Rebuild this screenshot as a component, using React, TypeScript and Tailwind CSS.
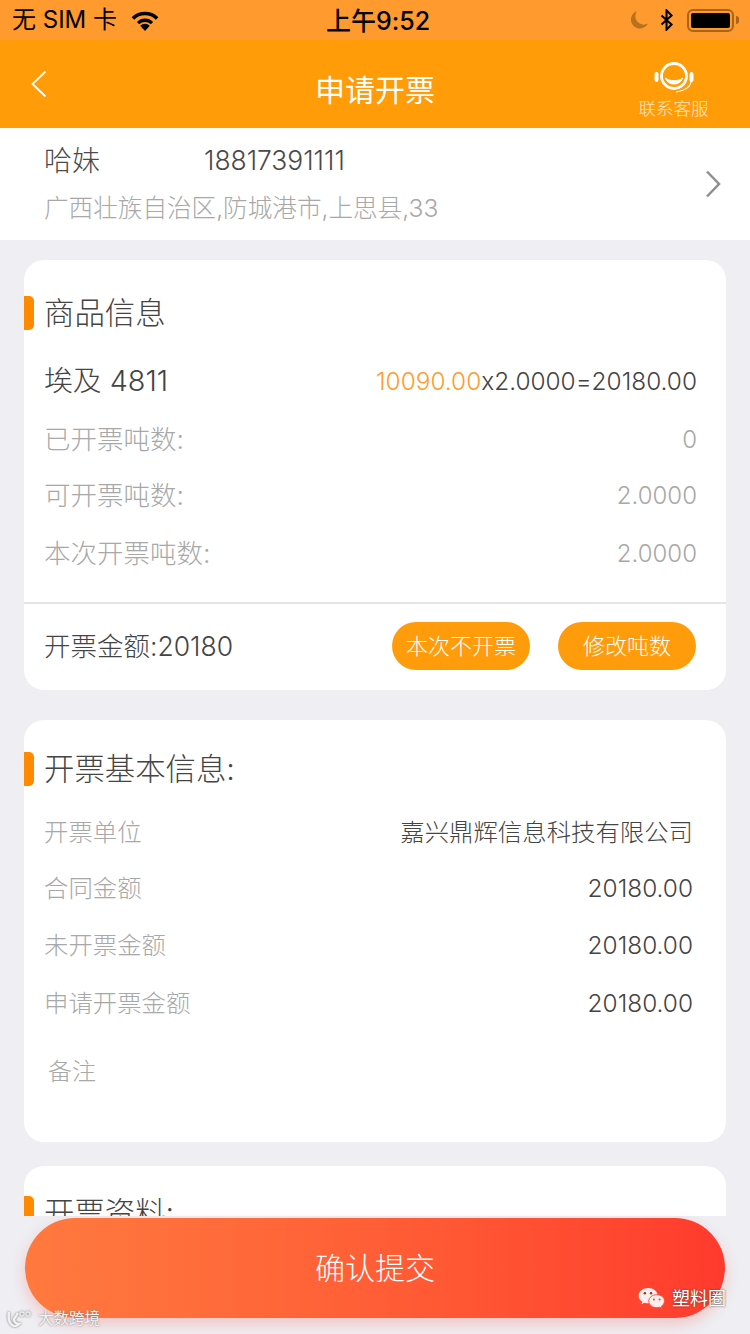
const fontStack = "font-['Inter','Noto_Sans_CJK_SC',sans-serif] font-light [font-feature-settings:'calt'_0]";

type InfoRowProps = {
  label: string;
  value: string;
  height: string;
  labelClass: string;
  valueClass: string;
};

const InfoRow = ({ label, value, height, labelClass, valueClass }: InfoRowProps) => (
  <div className={`flex items-center justify-between ${height}`}>
    <span className={labelClass}>{label}</span>
    <span className={valueClass}>{value}</span>
  </div>
);

const SectionTitle = ({ title }: { title: string }) => (
  <div className="flex items-center">
    <div className="h-[34px] w-[10px] rounded-r-[5px] bg-[#ff8a00]" />
    <h2 className="ml-[10px] text-[30.4px] font-light leading-[40px] text-[#444444]">{title}</h2>
  </div>
);

const StatusBar = () => (
  <div className="relative flex h-[40px] items-center justify-between bg-[#ff9a2e] pl-[12px] pr-[11px] text-black">
    <div className="flex items-center gap-[13px]">
      <span className="text-[24px] font-normal leading-none">无 SIM 卡</span>
      <svg width="30" height="21" viewBox="0 0 30 22">
        <path d="M15 22 10 16.5a7 7 0 0 1 10 0Z" fill="#000" />
        <path d="M6.5 12.5a12 12 0 0 1 17 0l-2.4 2.5a8.6 8.6 0 0 0-12.2 0Z" fill="#000" />
        <path d="M1 7.5a20 20 0 0 1 28 0l-2.6 2.6a16.2 16.2 0 0 0-22.8 0Z" fill="#000" />
      </svg>
    </div>
    <span className="absolute left-[326px] top-[6px] text-[25px] font-medium leading-[30px]">
      上午9:52
    </span>
    <div className="flex items-center">
      <svg width="18" height="18" viewBox="0 0 18 18">
        <path d="M7 0a9 9 0 1 0 11 12.5A8.5 8.5 0 0 1 7 0Z" fill="#b8721f" />
      </svg>
      <svg className="ml-[12px]" width="14" height="22" viewBox="0 0 14 24" fill="none" stroke="#000" strokeWidth="2.2">
        <path d="M1 7l11 10-5.5 5.5v-21L12 7 1 17" />
      </svg>
      <div className="ml-[13px] flex items-center">
        <div className="flex h-[23px] w-[47px] items-center rounded-[6px] border-2 border-[#a8651a] p-[2px]">
          <div className="h-full w-full rounded-[2px] bg-black" />
        </div>
        <div className="ml-[2px] h-[8px] w-[3px] rounded-r-[3px] bg-[#a8651a]" />
      </div>
    </div>
  </div>
);

const NavBar = () => (
  <div className="relative flex h-[88px] items-center justify-center bg-[#ff9c07] pt-[12px]">
    <button type="button" className="absolute left-[30px] top-[30px]">
      <svg width="18" height="28" viewBox="0 0 18 28" fill="none" stroke="#fff" strokeWidth="1.8">
        <path d="M15.5 1.5 2.5 14l13 12.5" />
      </svg>
    </button>
    <h1 className="text-[30px] font-normal leading-none text-white">申请开票</h1>
    <div className="absolute left-[638px] top-[21px] flex w-[71px] flex-col items-center">
      <svg width="42" height="34" viewBox="0 0 42 34" fill="none" stroke="#fff">
        <circle cx="21" cy="15" r="12.5" strokeWidth="2.8" />
        <path d="M12.5 17c2 8 15 8 17 0-3 3.500-14 3.500-17 0Z" fill="#fff" strokeWidth="1" />
        <path d="M3.500 13v6M38.500 13v6" strokeWidth="4" strokeLinecap="round" />
        <path d="M38 20c0 6-7 10-15 11" strokeWidth="1.2" />
      </svg>
      <span className="mt-[3px] whitespace-nowrap text-[17.5px] leading-[22px] text-[#ffe9c8]">联系客服</span>
    </div>
  </div>
);

const AddressBlock = () => (
  <div className="flex h-[112px] items-center justify-between bg-white pl-[44px] pr-[29px]">
    <div className="flex flex-col">
      <div className="flex h-[36px] items-center pb-[4px]">
        <span className="w-[160px] text-[28px] text-[#4a4a4a]">哈妹</span>
        <span className="text-[26.4px] text-[#4a4a4a]">18817391111</span>
      </div>
      <span className="mt-[11px] text-[24.6px] leading-[32px] text-[#a8a8a8]">
        广西壮族自治区,防城港市,上思县,33
      </span>
    </div>
    <svg width="16" height="28" viewBox="0 0 16 28" fill="none" stroke="#8e8e8e" strokeWidth="2.5">
      <path d="M2 1.500 14 14 2 26.500" />
    </svg>
  </div>
);

const GoodsCard = () => {
  const labelClass = "text-[26.5px] text-[#a8a8a8]";
  const valueClass = "text-[24px] text-[#a8a8a8]";
  return (
    <div className="rounded-[20px] bg-white pt-[33px]">
      <SectionTitle title="商品信息" />
      <div className="pl-[20px] pr-[29px]">
        <div className="mt-[28px] flex h-[40px] items-center justify-between">
          <span className="text-[28.8px] text-[#444444]">埃及 4811</span>
          <span className="text-[24.4px] text-[#444444]">
            <span className="text-[#ff9c2e]">10090.00</span>x2.0000=20180.00
          </span>
        </div>
        <div className="mt-[10px]">
          <InfoRow label="已开票吨数:" value="0" height="h-[58px]" labelClass={labelClass} valueClass={valueClass} />
          <InfoRow label="可开票吨数:" value="2.0000" height="h-[54px]" labelClass={labelClass} valueClass={valueClass} />
          <InfoRow label="本次开票吨数:" value="2.0000" height="h-[62px]" labelClass={labelClass} valueClass={valueClass} />
        </div>
      </div>
      <div className="mt-[17px] flex h-[88px] items-center border-t-2 border-[#e5e5e5] pb-[2px] pl-[20px] pr-[30px]">
        <span className="pt-[2px] text-[26.5px] text-[#444444]">开票金额:20180</span>
        <button
          type="button"
          className="ml-auto flex h-[48px] w-[138px] items-center justify-center rounded-full bg-[#ff9c0c] text-[22px] text-white"
        >
          本次不开票
        </button>
        <button
          type="button"
          className="ml-[28px] flex h-[48px] w-[138px] items-center justify-center rounded-full bg-[#ff9c0c] text-[22px] text-white"
        >
          修改吨数
        </button>
      </div>
    </div>
  );
};

const BasicInfoCard = () => {
  const labelClass = "text-[24.4px] text-[#a8a8a8]";
  const valueClass = "text-[24.4px] text-[#444444]";
  return (
    <div className="mt-[30px] h-[422px] rounded-[20px] bg-white pt-[29px]">
      <SectionTitle title="开票基本信息:" />
      <div className="mt-[15px] pl-[20px] pr-[33px]">
        <InfoRow label="开票单位" value="嘉兴鼎辉信息科技有限公司" height="h-[56px]" labelClass={labelClass} valueClass={valueClass} />
        <InfoRow label="合同金额" value="20180.00" height="h-[56px]" labelClass={labelClass} valueClass={valueClass} />
        <InfoRow label="未开票金额" value="20180.00" height="h-[58px]" labelClass={labelClass} valueClass={valueClass} />
        <InfoRow label="申请开票金额" value="20180.00" height="h-[58px]" labelClass={labelClass} valueClass={valueClass} />
        <div className="mt-[24px] pl-[4px] text-[24px] leading-[32px] text-[#a8a8a8]">备注</div>
      </div>
    </div>
  );
};

const DocsCard = () => (
  <div className="mt-[24px] h-[200px] rounded-[20px] bg-white pt-[27px]">
    <SectionTitle title="开票资料:" />
  </div>
);

const SubmitBar = () => (
  <div className="absolute inset-x-0 bottom-0 h-[118px] bg-[#eeeef3]">
    <button
      type="button"
      className="absolute left-[25px] top-[2px] flex h-[100px] w-[700px] items-center justify-center rounded-full bg-gradient-to-r from-[#ff7a3f] to-[#ff3a2d] text-[30px] font-light text-white shadow-[0_6px_14px_rgba(255,70,50,0.25)]"
    >
      确认提交
    </button>
    <div className="absolute left-[7px] top-[95px] flex items-center gap-[5px]">
      <svg className="drop-shadow-[0_0_1px_#777]" width="26" height="16" viewBox="0 0 26 16" fill="none" stroke="#f2f2f4">
        <path d="M2 1c-1 6 0 12 5 14 2 0 4-1 5-2-3 0-5-2-5-5l4-6" strokeWidth="2.4" />
        <circle cx="15" cy="3" r="2.2" strokeWidth="1.2" />
        <circle cx="21" cy="3" r="2.2" strokeWidth="1.2" />
      </svg>
      <span className="text-[15.5px] font-normal leading-none text-[#f2f2f4] [text-shadow:0_0_2px_#777]">大数跨境</span>
    </div>
    <div className="absolute left-[638px] top-[72px] flex items-center gap-[6px]">
      <svg width="28" height="21" viewBox="0 0 28 22">
        <path d="M10 0C4.500 0 0 3.500 0 8c0 2.600 1.500 4.800 3.800 6.300L3 17l3-1.600c1.200.4 2.500.6 4 .6 5.500 0 10-3.500 10-8s-4.500-8-10-8Z" fill="#fdeeee" />
        <path d="M19 7c-4.600 0-8.400 3-8.400 6.800s3.800 6.800 8.400 6.800c1 0 2-.2 3-.5l2.400 1.300-.6-2.200c2-1.300 3.200-3.200 3.200-5.400C27.400 10 23.600 7 19 7Z" fill="#fdeeee" stroke="#ff4a35" strokeWidth="1" />
        <circle cx="6.500" cy="5.500" r="1.300" fill="#8a3a30" />
        <circle cx="13" cy="5.500" r="1.300" fill="#8a3a30" />
        <circle cx="16" cy="12" r="1.100" fill="#d9503f" />
        <circle cx="22" cy="12" r="1.100" fill="#d9503f" />
      </svg>
      <span className="text-[18px] font-normal leading-none text-white [text-shadow:0_0_2px_#333]">塑料圈</span>
    </div>
  </div>
);

export default function App() {
  return (
    <div className={`relative h-[1334px] w-[750px] overflow-hidden bg-[#eeeef3] ${fontStack}`}>
      <StatusBar />
      <NavBar />
      <AddressBlock />
      <div className="px-[24px] pt-[20px]">
        <GoodsCard />
        <BasicInfoCard />
        <DocsCard />
      </div>
      <SubmitBar />
    </div>
  );
}
